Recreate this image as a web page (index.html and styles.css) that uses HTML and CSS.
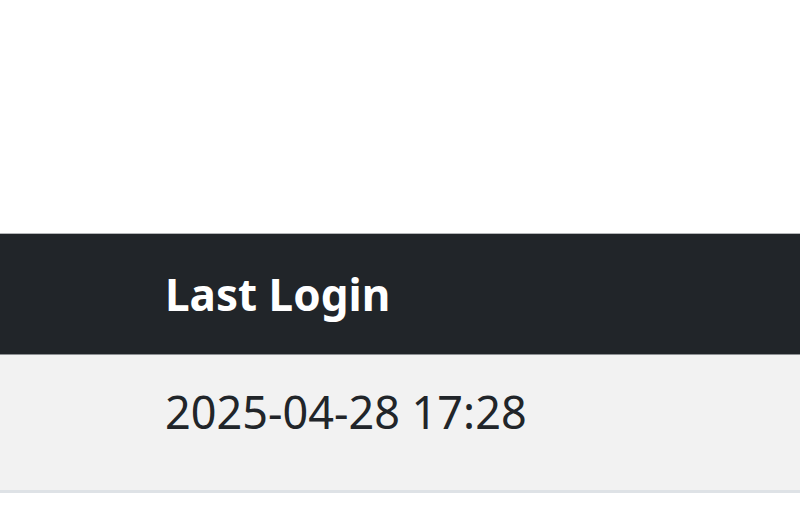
FILE: index.html
```html
<!DOCTYPE html>
<html>
<head>
<meta charset="utf-8">
<link rel="stylesheet" href="styles.css">
</head>
<body>
<table class="users">
  <thead>
    <tr><th class="gap"></th><th class="col">Last Login</th></tr>
  </thead>
  <tbody>
    <tr><td class="gap"></td><td class="col">2025-04-28 17:28</td></tr>
  </tbody>
</table>
</body>
</html>
```
FILE: styles.css
```css
html, body {
  margin: 0;
  background: #ffffff;
}
.users {
  margin-top: 233px;
  width: 100%;
  border-collapse: collapse;
  font-family: "Noto Sans", "Open Sans", sans-serif;
  font-size: 44px;
  color: #212529;
  text-align: left;
}
.users thead tr {
  background: #212529;
  color: #ffffff;
  border-top: 1px solid #b4b6b8;
  border-bottom: 1px solid #8d9093;
}
.users th {
  font-weight: 700;
  height: 120px;
  padding: 0;
  line-height: 1;
  vertical-align: middle;
}
.users tbody tr {
  background: #f2f2f2;
  border-bottom: 3px solid #dee2e6;
}
.users td {
  font-size: 45px;
  height: 112px;
  padding: 0 0 23px 0;
  line-height: 1;
  vertical-align: middle;
}
.users .gap {
  width: 165px;
  padding: 0;
}
```
